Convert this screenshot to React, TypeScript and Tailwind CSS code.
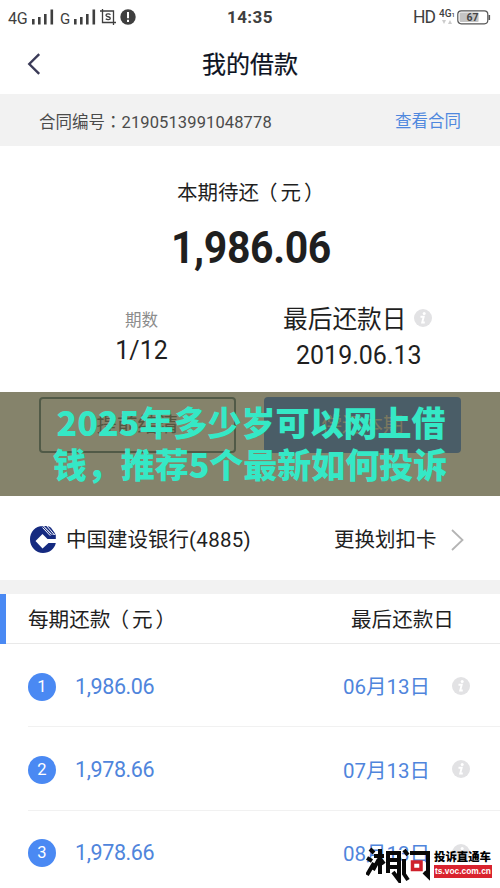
import React from "react";

const sans = "font-[Roboto,'Noto_Sans_CJK_SC',sans-serif]";

function Signal() {
  return (
    <svg width="22" height="16" viewBox="0 0 22 16" fill="#3f3f3f">
      <rect x="0" y="10" width="2.6" height="5.500" />
      <rect x="6" y="8" width="2.6" height="7.500" />
      <rect x="12" y="5" width="2.6" height="10.500" />
      <rect x="18.500" y="0.5" width="2.6" height="15" />
    </svg>
  );
}

function Info() {
  return (
    <svg width="18" height="18" viewBox="0 0 18 18">
      <circle cx="9" cy="9" r="9" fill="#e2e2e4" />
      <circle cx="10.2" cy="4.600" r="1.500" fill="#fff" />
      <path d="M6.500 7.800h3.200l-1.500 5.700h2.600" fill="none" stroke="#fff" strokeWidth="1.900" />
    </svg>
  );
}

function Unit() {
  return (
    <>
      <span className="relative -left-[2px]">（</span>
      <span className="relative left-px">元</span>
      <span className="relative left-[4px]">）</span>
    </>
  );
}

function StatusBar() {
  return (
    <div className="flex h-[34px] items-center pl-2 text-[#3f3f3f]">
      <span className="mt-[3px] w-[24px] text-[16px] leading-4 tracking-[-0.3px]">4G</span>
      <Signal />
      <span className="ml-[6px] mt-[3px] w-[14px] text-[15px] leading-4">G</span>
      <Signal />
      <svg className="ml-[4px]" width="16" height="16" viewBox="0 0 16 16" fill="none" stroke="#3f3f3f" strokeWidth="1.3">
        <path d="M0 2h13.500v14M2.500 0v13.500H16" />
        <path d="M10.500 5.600C9.500 4.600 6 4.500 6 6.300c0 1.900 4.300 1 4.300 2.900 0 1.700-3.300 1.700-4.500.6" />
      </svg>
      <svg className="ml-[4px]" width="16" height="16" viewBox="0 0 16 16">
        <circle cx="8" cy="8" r="7.7" fill="#3f3f3f" />
        <path d="M8 3v6.200M8 10.800v2.200" stroke="#fff" strokeWidth="2" />
      </svg>
      <span className="ml-[91px] w-[50px] text-[17px] font-bold leading-5 tracking-[0.4px]">14:35</span>
      <span className="ml-[136px] w-[24px] text-[17.5px] leading-5 tracking-[-1px]">HD</span>
      <span className="flex w-[20px] flex-col items-center">
        <span className="text-[10px] font-medium leading-[10px]">4G<span className="text-[6px]">1</span></span>
        <svg width="10" height="5" viewBox="0 0 10 5" fill="#ccc">
          <path d="M0 0h4L2 4zM8 0l2 4H6z" />
        </svg>
      </span>
      <svg width="34" height="15" viewBox="0 0 34 15">
        <rect x="0.8" y="0.8" width="30" height="13" rx="3.5" fill="#fff" stroke="#555" strokeWidth="1.2" />
        <rect x="2.6" y="2.5" width="19" height="9.6" rx="1" fill="#c4c4c4" />
        <path d="M32.3 5v5" stroke="#555" strokeWidth="1.6" />
        <text x="15.5" y="11.3" textAnchor="middle" fontSize="10.5" fontWeight="700" fill="#444">67</text>
      </svg>
    </div>
  );
}

function Row({ n, amount, date }: { n: number; amount: string; date: string }) {
  return (
    <div className="ml-[28px] flex h-[83.3px] items-center border-b border-[#f1f1f1] text-[#4f85dc]">
      <span className="mt-[3px] flex size-7 items-center justify-center rounded-full bg-[#4a89f3] pt-px text-[16.5px] text-white">{n}</span>
      <span className="ml-[19px] mt-[3px] w-[268px] text-[21.5px] tracking-[-0.4px]">{amount}</span>
      <span className="mt-[5px] w-[109px] text-[20.5px]">{date}</span>
      <span className="mt-[2px]">
        <Info />
      </span>
    </div>
  );
}

export default function App() {
  return (
    <div className={`relative h-[888px] w-[500px] overflow-hidden bg-white text-[#1f1f1f] ${sans}`}>
      <StatusBar />
      <div className="flex h-[60px] items-center pl-[27px] text-[#0c1222]">
        <svg width="14" height="22" viewBox="0 0 14 22" fill="none" stroke="#3b3b58" strokeWidth="2.4">
          <path d="M12.2 1.2L2.3 11l9.9 9.8" />
        </svg>
        <h1 className="ml-[161px] mt-[2px] text-[24px] leading-7 [-webkit-text-stroke:0.2px_#0c1222]">我的借款</h1>
      </div>
      <div className="flex h-[52px] items-center bg-[#f2f2f2] pl-[39px] pr-[39px] pt-[4px] text-[16.5px] text-[#4b4b4b]">
        <span className="flex-1">
          合同编号<span className="font-['Noto_Sans_CJK_TC']">：</span>
          <span className="tracking-[0.12px]">2190513991048778</span>
        </span>
        <span className="text-[#4f88de]">查看合同</span>
      </div>

      <div className="flex h-[246px] flex-col">
        <div className="ml-[177px] mt-[31px] text-[20.5px] leading-8">本期待还<Unit /></div>
        <div className="mt-[14px] scale-x-[0.92] pl-[2px] text-center text-[44.5px] font-bold leading-[50px] tracking-[-0.4px]">1,986.06</div>
        <div className="mt-[30px] flex">
          <div className="ml-[80px] w-[123px] text-center">
            <div className="mt-[6px] text-[16.5px] leading-6 text-[#8c8c8c]">期数</div>
            <div className="mt-[2px] text-[25px] leading-8">1/12</div>
          </div>
          <div className="ml-[80px]">
            <div className="flex items-center text-[24.7px] leading-8">
              <span className="mt-px w-[131px]">最后还款日</span>
              <span className="mb-[3px] flex">
                <Info />
              </span>
            </div>
            <div className="ml-[13px] mt-[4px] text-[25px] leading-8">2019.06.13</div>
          </div>
        </div>
      </div>

      <div className="h-[104px] bg-white">
        <div className="flex gap-[28px] px-[39px] pt-[5px] text-[20.5px]">
          <div className="flex h-[56px] w-[197px] items-center justify-center rounded border-2 border-[#5d8090] text-[#66707a]">提前结清</div>
          <div className="flex h-[56px] w-[197px] items-center justify-center rounded bg-[#4a89f3] text-[#dcdcdc]">偿还本期</div>
        </div>
      </div>

      <div className="flex h-[84px] items-center pl-[29px] text-[20.5px]">
        <svg className="mt-px" width="28" height="28" viewBox="0 0 28 28">
          <path d="M14 1C6 1 1 7 1 14.500S7 28 14 28c6.500 0 11.500-4 12.800-10h-7.300l-6 5.500L6.500 16l7-7 5 5h8.300V9.500H22L13.800 1z" fill="#152a80" />
          <path d="M15 1c3 0 5 .3 7 1.700l4.300 6-3.300.5L15 1z" fill="#152a80" />
          <path d="M13.500 2.500l7.800 8.200M17.500.5l8 9.500" stroke="#fff" strokeWidth="1" />
        </svg>
        <span className="ml-[9px] mt-[4px] w-[268px]">中国建设银行<span className="tracking-[0.3px]">(4885)</span></span>
        <span className="mt-[4px] w-[117px]">更换划扣卡</span>
        <svg className="mt-[3px]" width="13" height="22" viewBox="0 0 13 22" fill="none" stroke="#b4b4b4" strokeWidth="1.8">
          <path d="M1 1l10.500 10L1 21" />
        </svg>
      </div>
      <div className="h-[14px] bg-[#f2f2f2]" />
      <div className="flex h-[50px] items-center border-b border-[#e9e9e9]">
        <span className="h-[50px] w-[6px] bg-[#4a89f3]" />
        <span className="ml-[22px] mt-[4px] w-[323px] text-[20.6px]">每期还款<Unit /></span>
        <span className="mt-[4px] text-[20.6px]">最后还款日</span>
      </div>
      <Row n={1} amount="1,986.06" date="06月13日" />
      <Row n={2} amount="1,978.66" date="07月13日" />
      <Row n={3} amount="1,978.66" date="08月13日" />

      <div className="absolute left-0 top-[392px] flex h-[104px] w-full flex-col items-center bg-[rgba(75,72,37,0.68)] pt-[9px] font-['Noto_Sans_CJK_SC',sans-serif] text-[34px] font-black leading-[42px] text-[#35e8c6]">
        <div className="whitespace-nowrap pl-[2px]">2025年多少岁可以网上借</div>
        <div className="whitespace-nowrap">钱，推荐5个最新如何投诉</div>
      </div>

      <div className="absolute left-[366px] top-[846px] flex">
        <svg width="66" height="37" viewBox="0 0 66 37" fill="none" stroke="#080808" strokeWidth="4">
          <path d="M4 3l4 4M1 12l5 3M1 29l7-12M8 10h10M14 3v25M13 13L7 24M15 14l3 4M22 5v22M21 7h12v27l-6-8M23 14h9M23 21h9" />
          <path d="M38 4l4 5M38 13v15l4 6M44 7h18v23l-4-4" />
          <path d="M46.500 16h8.500v7.500h-8.500z" stroke="#cf202b" strokeWidth="3.500" />
        </svg>
        <div className="ml-[2px] mt-[4px] w-[58px]">
          <div className="whitespace-nowrap text-[11.4px] font-black leading-[14px] text-black">投诉直通车</div>
          <div className="mt-px flex h-[13px] justify-center bg-[#d9232e] font-['Liberation_Sans'] text-[8.4px] font-bold leading-[13px] text-white">ts.voc.com.cn</div>
        </div>
      </div>
    </div>
  );
}
